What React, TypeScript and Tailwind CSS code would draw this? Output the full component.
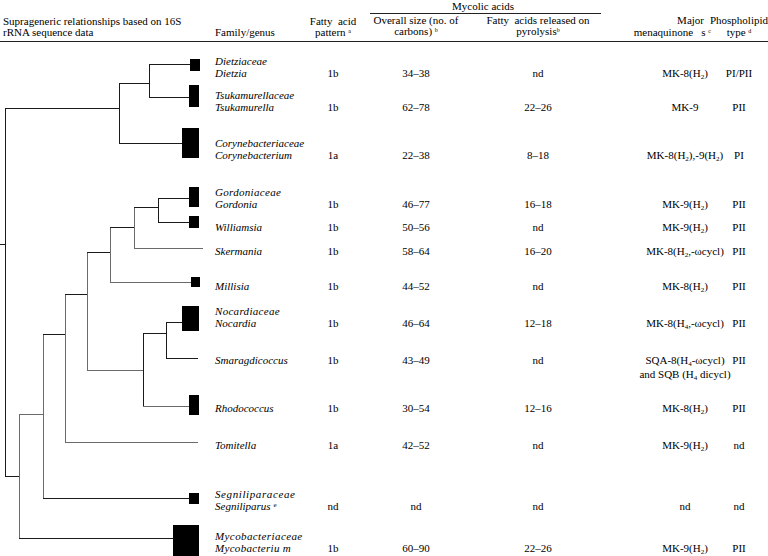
import type { ReactNode } from 'react'

type Row = {
  mt: string
  fam?: string
  famCls?: string
  genus: ReactNode
  genusCls?: string
  pat: string
  size: string
  rel: string
  mk: ReactNode
  mk2?: ReactNode
  pl: string
}

const H2 = <sub className="text-[7px]">2</sub>
const H4 = <sub className="text-[7px]">4</sub>

const rows: Row[] = [
  { mt: 'mt-[13px]', fam: 'Dietziaceae', genus: 'Dietzia', pat: '1b', size: '34–38', rel: 'nd', mk: <>MK-8(H{H2})</>, pl: 'PI/PII' },
  { mt: 'mt-[10px]', fam: 'Tsukamurellaceae', genus: 'Tsukamurella', pat: '1b', size: '62–78', rel: '22–26', mk: 'MK-9', pl: 'PII' },
  { mt: 'mt-[24px]', fam: 'Corynebacteriaceae', genus: 'Corynebacterium', pat: '1a', size: '22–38', rel: '8–18', mk: <>MK-8(H{H2}),-9(H{H2})</>, pl: 'PI' },
  { mt: 'mt-[25px]', fam: 'Gordoniaceae', famCls: 'tracking-[0.3px]', genus: 'Gordonia', pat: '1b', size: '46–77', rel: '16–18', mk: <>MK-9(H{H2})</>, pl: 'PII' },
  { mt: 'mt-[11px]', genus: 'Williamsia', pat: '1b', size: '50–56', rel: 'nd', mk: <>MK-9(H{H2})</>, pl: 'PII' },
  { mt: 'mt-[12px]', genus: 'Skermania', pat: '1b', size: '58–64', rel: '16–20', mk: <>MK-8(H{H2},-ωcycl)</>, pl: 'PII' },
  { mt: 'mt-[23px]', genus: 'Millisia', pat: '1b', size: '44–52', rel: 'nd', mk: <>MK-8(H{H2})</>, pl: 'PII' },
  { mt: 'mt-[13px]', fam: 'Nocardiaceae', famCls: 'tracking-[0.3px]', genus: 'Nocardia', pat: '1b', size: '46–64', rel: '12–18', mk: <>MK-8(H{H4},-ωcycl)</>, pl: 'PII' },
  { mt: 'mt-[25px]', genus: 'Smaragdicoccus', pat: '1b', size: '43–49', rel: 'nd', mk: <>SQA-8(H{H4}-ωcycl)</>, mk2: <>and SQB (H{H4} dicycl)</>, pl: 'PII' },
  { mt: 'mt-[22px]', genus: 'Rhodococcus', pat: '1b', size: '30–54', rel: '12–16', mk: <>MK-8(H{H2})</>, pl: 'PII' },
  { mt: 'mt-[25px]', genus: 'Tomitella', pat: '1a', size: '42–52', rel: 'nd', mk: <>MK-9(H{H2})</>, pl: 'nd' },
  { mt: 'mt-[37px]', fam: 'Segniliparaceae', famCls: 'tracking-[0.6px]', genus: <>Segniliparus <sup className="text-[7px] not-italic">e</sup></>, pat: 'nd', size: 'nd', rel: 'nd', mk: 'nd', pl: 'nd' },
  { mt: 'mt-[18px]', fam: 'Mycobacteriaceae', famCls: 'tracking-[0.4px]', genus: 'Mycobacteriu m', genusCls: 'tracking-[0.3px]', pat: '1b', size: '60–90', rel: '22–26', mk: <>MK-9(H{H2})</>, pl: 'PII' },
]

// tree segments: [x, y, w, h, gray]
const hl = (x1: number, x2: number, y: number, g = false) => [x1, y, x2 - x1 + 1, 1, g] as const
const vl = (x: number, y1: number, y2: number, g = false) => [x, y1, 1, y2 - y1 + 1, g] as const

const lines = [
  hl(0, 5, 244), vl(5, 108, 476), hl(5, 119, 108), vl(119, 83, 143), hl(119, 149, 83),
  vl(149, 64, 97), hl(149, 190, 64), hl(149, 189, 97), hl(119, 182, 143),
  hl(5, 19, 476), vl(19, 414, 538, true), hl(19, 173, 538), hl(19, 43, 414, true),
  vl(43, 334, 498, true), hl(43, 189, 498), hl(43, 65, 334), vl(65, 294, 442, true),
  hl(65, 197, 442, true), hl(65, 87, 294), vl(87, 252, 370, true), hl(87, 143, 370, true),
  vl(143, 333, 406), hl(143, 189, 406, true), hl(143, 166, 333), vl(166, 322, 358),
  hl(166, 182, 322), hl(166, 197, 358), hl(87, 110, 252), vl(110, 227, 282, true),
  hl(110, 191, 282, true), hl(110, 134, 227), vl(134, 207, 248, true), hl(134, 202, 248, true),
  hl(134, 158, 207), vl(158, 198, 222), hl(158, 190, 198), hl(158, 190, 222),
]

const boxes = [
  [190, 59, 10, 12], [189, 85, 10, 22], [182, 128, 17, 30], [189, 187, 10, 20],
  [189, 216, 10, 12], [191, 277, 9, 10], [182, 306, 17, 25], [189, 395, 10, 20],
  [189, 493, 10, 11], [173, 525, 26, 31],
]

function Tree() {
  return (
    <svg width="205" height="514" viewBox="0 42 205 514" shapeRendering="crispEdges" className="shrink-0">
      {lines.map(([x, y, w, h, g], i) => (
        <rect key={i} x={x} y={y} width={w} height={h} fill={g ? '#6b6b6b' : '#1a1a1a'} />
      ))}
      {boxes.map(([x, y, w, h], i) => (
        <rect key={'b' + i} x={x} y={y} width={w} height={h} fill="#000" />
      ))}
    </svg>
  )
}

function Cell({ w, top, children, extra }: { w: string; top: boolean; children: ReactNode; extra?: string }) {
  return (
    <div className={`${w} ${extra ?? ''} flex flex-col items-center shrink-0`}>
      {top && <div className="h-[12px]" />}
      {children}
    </div>
  )
}

export default function App() {
  return (
    <div className="w-[768px] h-[556px] overflow-hidden bg-white text-black font-['Liberation_Serif',serif] text-[11px]">
      {/* header */}
      <div className="flex h-[42px] border-b border-[#222] leading-[11px]">
        <div className="w-[205px] shrink-0 pl-[3px] pb-[3px] flex flex-col justify-end">
          <div>Suprageneric relationships based on 16S</div>
          <div>rRNA sequence data</div>
        </div>
        <div className="w-[100px] shrink-0 pl-[10px] pb-[3px] flex flex-col justify-end">
          <div>Family/genus</div>
        </div>
        <div className="w-[56px] shrink-0 pb-[3px] flex flex-col justify-end items-center">
          <div>Fatty&nbsp; acid</div>
          <div>pattern <sup className="text-[6px]">a</sup></div>
        </div>
        <div className="w-[244px] shrink-0 flex flex-col">
          <div className="text-center leading-[11px] pt-[1px]">Mycolic acids</div>
          <div className="h-px bg-[#222] mt-[1px] ml-[9px] mr-[4px]" />
          <div className="flex mt-[1px]">
            <div className="w-[110px] flex flex-col items-center">
              <div className="whitespace-nowrap">Overall size (no. of</div>
              <div>carbons) <sup className="text-[6px]">b</sup></div>
            </div>
            <div className="w-[134px] flex flex-col items-center">
              <div className="whitespace-nowrap">Fatty&nbsp; acids released on</div>
              <div>pyrolysis<sup className="text-[6px]">b</sup></div>
            </div>
          </div>
        </div>
        <div className="w-[108px] shrink-0 pb-[3px] flex flex-col justify-end leading-[12px] whitespace-nowrap">
          <div className="text-right pr-[9px]">Major</div>
          <div className="text-right pr-[2px]">menaquinone&nbsp;&nbsp; s <sup className="text-[6px]">c</sup></div>
        </div>
        <div className="w-[52px] shrink-0 pb-[3px] flex flex-col justify-end items-center leading-[12px]">
          <div>Phospholipid</div>
          <div>type <sup className="text-[6px]">d</sup></div>
        </div>
      </div>

      {/* body */}
      <div className="flex">
        <Tree />
        <div className="w-[563px] flex flex-col leading-[12px]">
          {rows.map((r, i) => {
            const top = !!r.fam
            return (
              <div key={i} className={`flex ${r.mt}`}>
                <div className="w-[100px] shrink-0 pl-[10px] italic whitespace-nowrap">
                  {r.fam && <div className={r.famCls}>{r.fam}</div>}
                  <div className={r.genusCls}>{r.genus}</div>
                </div>
                <Cell w="w-[56px]" top={top}>{r.pat}</Cell>
                <Cell w="w-[110px]" top={top}>{r.size}</Cell>
                <Cell w="w-[134px]" top={top}>{r.rel}</Cell>
                <Cell w="w-[108px]" extra="pl-[52px] whitespace-nowrap" top={top}>
                  <div>{r.mk}</div>
                  {r.mk2 && <div className="mt-[2px]">{r.mk2}</div>}
                </Cell>
                <Cell w="w-[52px]" top={top}>{r.pl}</Cell>
              </div>
            )
          })}
        </div>
      </div>
    </div>
  )
}
